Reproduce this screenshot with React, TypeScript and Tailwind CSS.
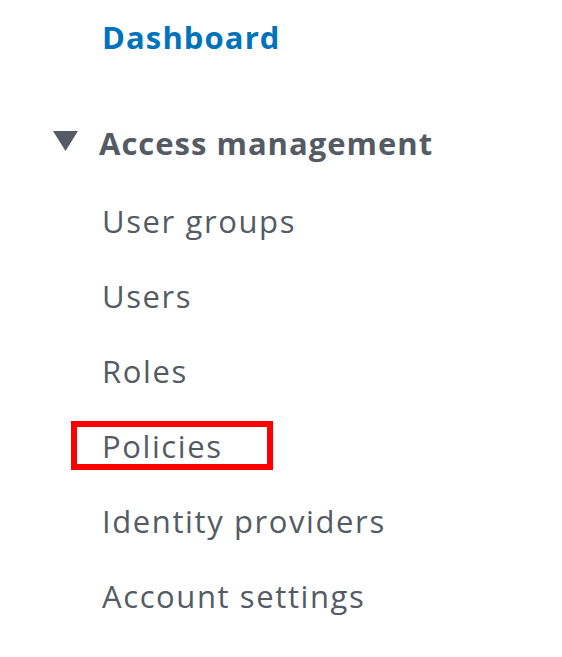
const items = [
  "User groups",
  "Users",
  "Roles",
  "Policies",
  "Identity providers",
  "Account settings",
];

const NavItem = ({ label }: { label: string }) => {
  const highlighted = label === "Policies";
  return (
    <li className="relative h-[75px] leading-[75px] tracking-[1.6px] text-[#545b64]">
      {highlighted && (
        <span className="pointer-events-none absolute left-[-31px] top-[12px] h-[49px] w-[202px] border-[6px] border-[#ff0000]" />
      )}
      <span className="relative">{label}</span>
    </li>
  );
};

export default function App() {
  return (
    <div className="h-[657px] w-[562px] bg-white font-['Open_Sans',sans-serif] text-[31px]">
      <div className="pl-[102px]">
        <div className="h-[75px] font-bold leading-[75px] tracking-[1.1px] text-[#0073bb]">
          Dashboard
        </div>
      </div>
      <div className="mt-[31px] flex h-[75px] items-center pl-[53px]">
        <svg width="25" height="20" viewBox="0 0 25 20" className="mr-[21px] mb-[5px]">
          <polygon points="0,0 25,0 12.5,20" fill="#545b64" />
        </svg>
        <span className="font-bold leading-[75px] tracking-[1px] text-[#545b64]">
          Access management
        </span>
      </div>
      <ul className="mt-[3px] pl-[102px]">
        {items.map((item) => (
          <NavItem key={item} label={item} />
        ))}
      </ul>
    </div>
  );
}
